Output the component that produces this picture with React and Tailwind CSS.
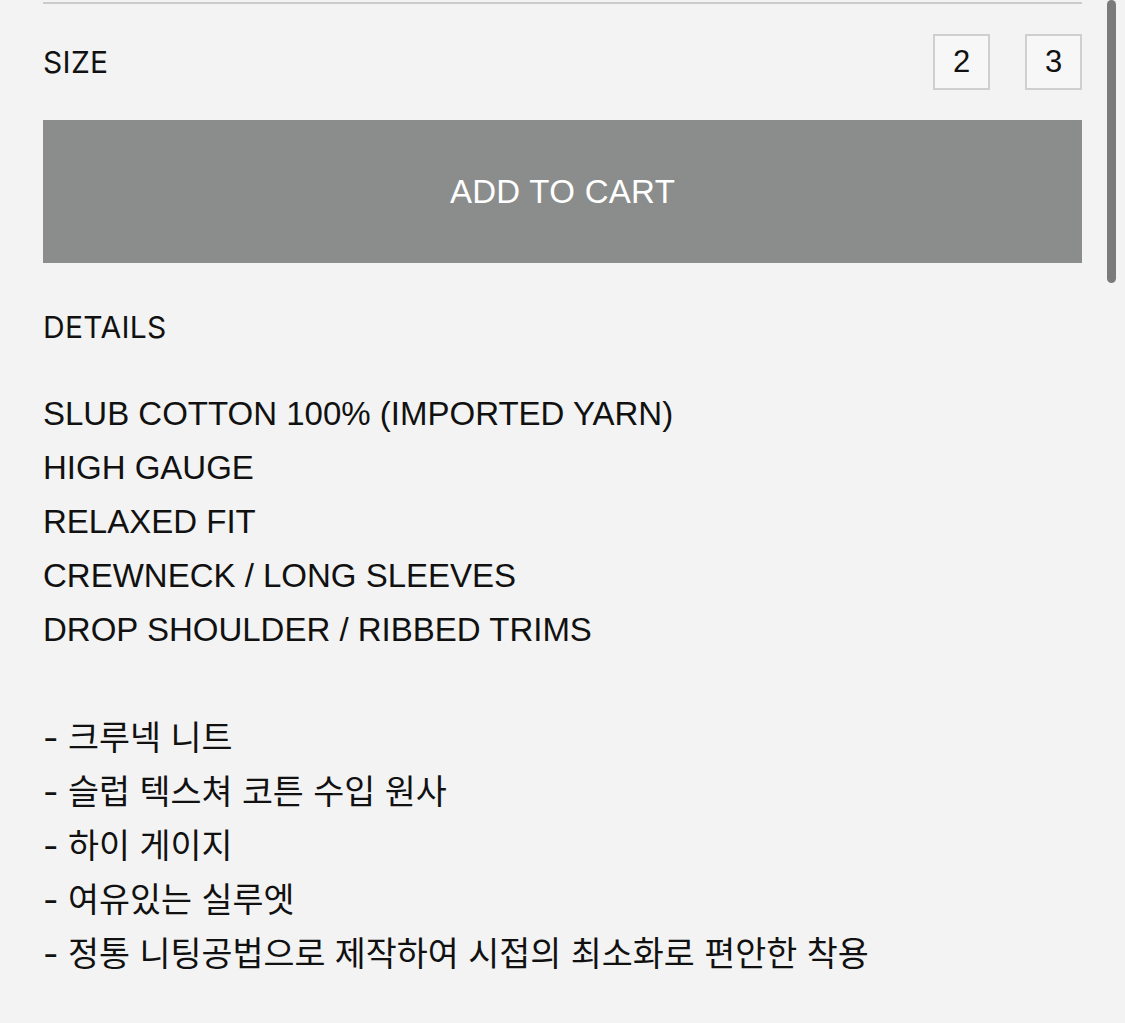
export default function App() {
  const en = [
    "SLUB COTTON 100% (IMPORTED YARN)",
    "HIGH GAUGE",
    "RELAXED FIT",
    "CREWNECK / LONG SLEEVES",
    "DROP SHOULDER / RIBBED TRIMS",
  ];
  const ko = [
    "- 크루넥 니트",
    "- 슬럽 텍스쳐 코튼 수입 원사",
    "- 하이 게이지",
    "- 여유있는 실루엣",
    "- 정통 니팅공법으로 제작하여 시접의 최소화로 편안한 착용",
  ];
  const inter = { fontFamily: 'Inter, "Noto Sans CJK KR", sans-serif' };
  return (
    <div
      className="relative w-[1125px] h-[1023px] overflow-hidden bg-[#f3f3f3] text-[#111]"
      style={{ fontFamily: '"Liberation Sans", "Noto Sans CJK KR", sans-serif' }}
    >
      <div className="pl-[43px] pr-[43px] pt-[2px]">
        <div className="h-[2px] bg-[#cbcbcb]" />
        <div className="flex items-center justify-between h-[116px]">
          <span className="text-[30px] leading-none tracking-[0.3px]" style={inter}>SIZE</span>
          <div className="flex gap-[35px]">
            <div className="w-[57px] h-[56px] border-2 border-[#cfcfcf] bg-[#f7f7f7] flex items-center justify-center text-[31px]">2</div>
            <div className="w-[57px] h-[56px] border-2 border-[#cfcfcf] bg-[#f7f7f7] flex items-center justify-center text-[31px]">3</div>
          </div>
        </div>
        <div className="h-[143px] bg-[#8a8d8b] flex items-center justify-center text-white text-[33px] tracking-[0.3px]">
          ADD TO CART
        </div>
        <div className="mt-[46px] text-[30px] leading-[36px] tracking-[0.3px]" style={inter}>DETAILS</div>
        <div className="mt-[42px] text-[33px] leading-[54px]">
          {en.map((t) => (
            <div key={t}>{t}</div>
          ))}
          <div className="h-[54px]" />
          {ko.map((t) => (
            <div key={t} className="text-[33.7px]" style={inter}>{t}</div>
          ))}
        </div>
      </div>
      <div className="absolute right-[9px] top-0 w-[9px] h-[283px] rounded-full bg-[#7b7b7b]" />
    </div>
  );
}
